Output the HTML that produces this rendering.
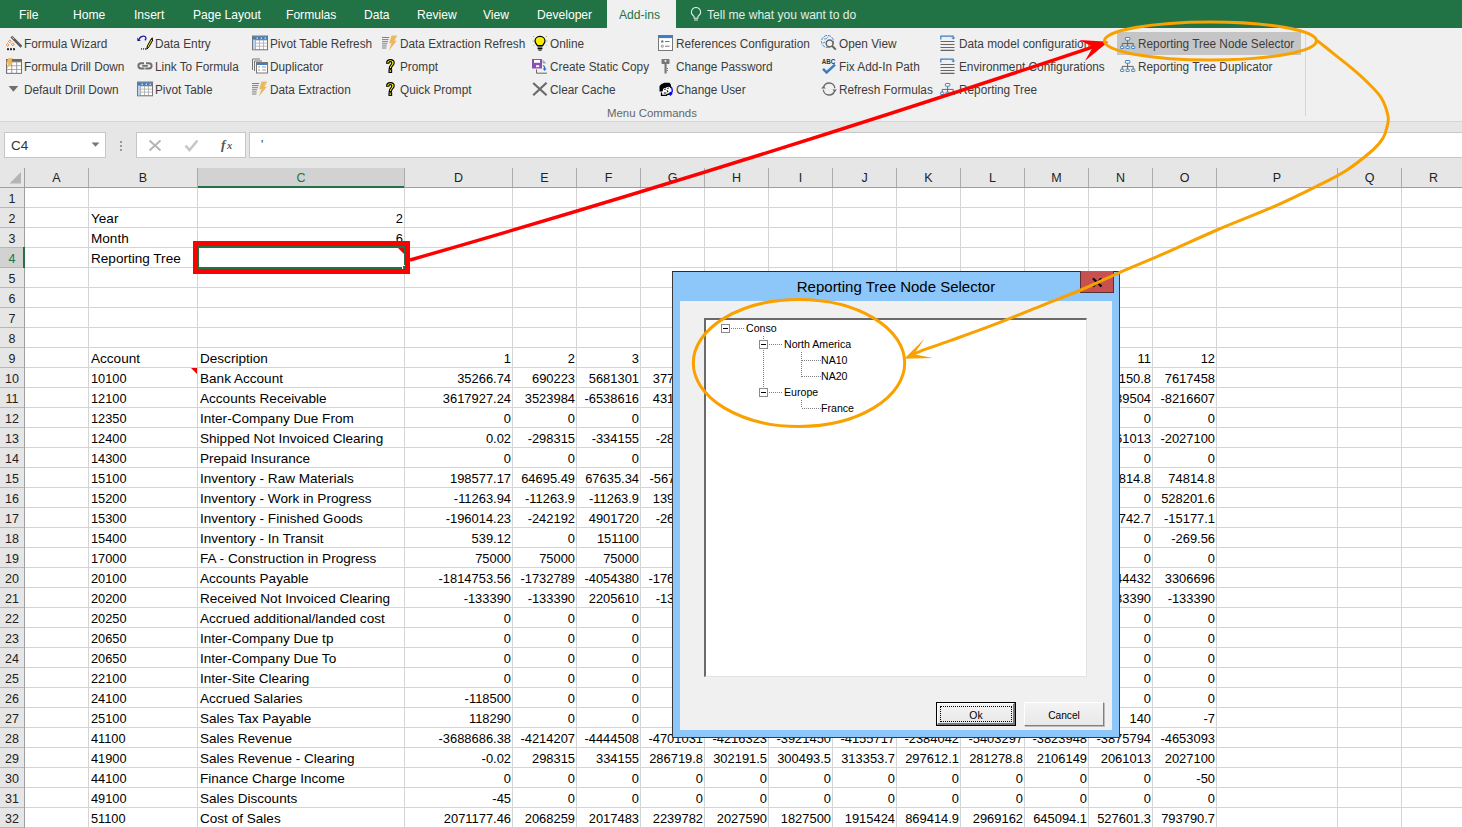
<!DOCTYPE html><html><head><meta charset="utf-8"><style>
*{box-sizing:border-box}
body{margin:0;width:1462px;height:828px;overflow:hidden;position:relative;background:#fff;font-family:"Liberation Sans",sans-serif}
.ab{position:absolute}
.tab{position:absolute;top:1px;height:28px;line-height:28px;color:#fff;font-size:13px;white-space:nowrap;transform:scaleX(0.93);transform-origin:0 50%}
.cmd{position:absolute;height:16px;line-height:16px;font-size:12.3px;color:#3c3c3c;white-space:nowrap;transform:scaleX(0.96);transform-origin:0 50%;margin-top:1px;margin-left:-1.2px}
.ic{position:absolute;width:16px;height:16px}
.t{position:absolute;height:20px;line-height:20px;font-size:13.3px;color:#000;white-space:nowrap;transform:scaleX(1.02);transform-origin:0 50%}
.tn{position:absolute;height:20px;line-height:20px;font-size:13.3px;color:#000;white-space:nowrap;transform:scaleX(0.96);transform-origin:0 50%}
.n{position:absolute;height:20px;line-height:20px;font-size:13.3px;color:#000;white-space:nowrap;text-align:right;transform:scaleX(0.97);transform-origin:100% 50%}
.gv{position:absolute;top:188px;width:1px;height:640px;background:#d4d4d4}
.gh{position:absolute;left:25px;width:1437px;height:1px;background:#d4d4d4}
.rh{position:absolute;left:0;width:24px;height:20px;line-height:20px;text-align:center;font-size:12.5px;color:#222}
.ch{position:absolute;top:168px;height:19px;line-height:20px;text-align:center;font-size:12.5px;color:#222}
</style></head><body>

<div class="ab" style="left:0;top:0;width:1462px;height:29px;background:#217346"></div>
<div class="tab" style="left:18.6px">File</div>
<div class="tab" style="left:72.6px">Home</div>
<div class="tab" style="left:134.4px">Insert</div>
<div class="tab" style="left:192.5px">Page Layout</div>
<div class="tab" style="left:286.2px">Formulas</div>
<div class="tab" style="left:364.4px">Data</div>
<div class="tab" style="left:417px">Review</div>
<div class="tab" style="left:483.2px">View</div>
<div class="tab" style="left:537.1px">Developer</div>
<div class="ab" style="left:607px;top:0;width:69px;height:29px;background:#f0f0f0"></div>
<div class="tab" style="left:619px;color:#217346">Add-ins</div>
<svg class="ab" style="left:689px;top:6px" width="14" height="16" viewBox="0 0 14 16"><path d="M7 1.5a4.5 4.5 0 0 0-2.6 8.2c.5.4.8 1 .8 1.6v1h3.6v-1c0-.6.3-1.2.8-1.6A4.5 4.5 0 0 0 7 1.5z" fill="none" stroke="#e3eee7" stroke-width="1.1"/><path d="M5.2 14h3.6" stroke="#e3eee7" stroke-width="1.1"/></svg>
<div class="tab" style="left:707px;color:#e3eee7">Tell me what you want to do</div>
<div class="ab" style="left:0;top:28px;width:1462px;height:93px;background:#f0f0f0"></div>
<div class="ab" style="left:0;top:121px;width:1462px;height:1px;background:#d5d5d5"></div>
<div class="ab" style="left:1117px;top:32px;width:184px;height:23px;background:#c5c5c5"></div>
<div class="ab" style="left:1305px;top:32px;width:1px;height:84px;background:#d5d5d5"></div>
<div class="ab" style="left:607px;top:105px;height:16px;line-height:16px;font-size:11.4px;color:#666;white-space:nowrap">Menu Commands</div>
<svg class="ic" style="left:6px;top:35px" width="16" height="16" viewBox="0 0 16 16"><path d="M5.4 1.6 L15.4 11.8" stroke="#5a5a5a" stroke-width="2.6" stroke-linecap="butt"/><path d="M6.4 2.4 L7.8 3.9" stroke="#e8e8e8" stroke-width="1"/>
<path d="M3.8 5 l1.4 1.4 -1.4 1.4 -1.4 -1.4z M1.6 8.4 l1.4 1.4 -1.4 1.4 -1.4 -1.4z M6.8 8 l1.4 1.4 -1.4 1.4 -1.4 -1.4z" fill="none" stroke="#e8731c" stroke-width="0.9"/>
<rect x="1" y="13.2" width="2" height="2" fill="#2a2a2a"/><rect x="4" y="13.2" width="2" height="2" fill="#2a2a2a"/><rect x="7" y="13.2" width="2" height="2" fill="#2a2a2a"/></svg>
<div class="cmd" style="left:25.5px;top:35px">Formula Wizard</div>
<svg class="ic" style="left:6px;top:58px" width="16" height="16" viewBox="0 0 16 16"><rect x="0.5" y="1.5" width="15" height="13.8" fill="#9a9a9a" stroke="#6f6f6f" stroke-width="1"/><rect x="6" y="1" width="10" height="2.6" fill="#6a6a6a"/>
<rect x="1.2" y="4.4" width="4" height="3" fill="#fff"/><rect x="6.2" y="4.4" width="4" height="3" fill="#fff"/><rect x="11.2" y="4.4" width="3.8" height="3" fill="#fff"/>
<rect x="1.2" y="8.2" width="4" height="3" fill="#fff"/><rect x="6.2" y="8.2" width="4" height="3" fill="#fff"/><rect x="11.2" y="8.2" width="3.8" height="3" fill="#fff"/>
<rect x="1.2" y="12" width="4" height="2.8" fill="#fff"/><rect x="6.2" y="12" width="4" height="2.8" fill="#fff"/><rect x="11.2" y="12" width="3.8" height="2.8" fill="#fff"/>
<path d="M2.6 -0.2 L7.2 -0.2 L4.8 3.8 L7.4 3.8 L0.6 10.8 L2.4 5.6 L0 5.6z" fill="#ecb961"/></svg>
<div class="cmd" style="left:25.5px;top:58px">Formula Drill Down</div>
<svg class="ic" style="left:6px;top:81px" width="16" height="16" viewBox="0 0 16 16"><path d="M2.6 5 L12.2 5 L7.4 10.8z" fill="#6f6f6f"/></svg>
<div class="cmd" style="left:25.5px;top:81px">Default Drill Down</div>
<svg class="ic" style="left:137px;top:35px" width="16" height="16" viewBox="0 0 16 16"><path d="M2.2 4.6 C2.5 1 8 0.2 8.8 2.6 C9.2 3.8 8.4 4.8 7.8 5.2" fill="none" stroke="#1c1c9a" stroke-width="1.3"/><path d="M0.3 2.4 L0.3 6 L3.8 6z" fill="#1c1c9a"/>
<rect x="4" y="13.4" width="1.1" height="1.1" fill="#000"/><rect x="6" y="13.4" width="1.1" height="1.1" fill="#000"/><rect x="8" y="13.4" width="1.1" height="1.1" fill="#000"/>
<path d="M9.8 14.2 L10.4 10.8 L14.2 4 L15.8 5 L12 11.8z" fill="#f2e52a" stroke="#000" stroke-width="1"/><path d="M14.2 4 L15 2.8 L16 3.4 L15.8 5z" fill="#c00" stroke="#000" stroke-width="0.6"/></svg>
<div class="cmd" style="left:156.6px;top:35px">Data Entry</div>
<svg class="ic" style="left:137px;top:58px" width="16" height="16" viewBox="0 0 16 16"><path d="M7 5.2 H4 A2.6 2.6 0 0 0 4 10.4 H7.6" fill="none" stroke="#6f6f6f" stroke-width="2"/><path d="M9 5.2 H12 A2.6 2.6 0 0 1 12 10.4 H8.4" fill="none" stroke="#6f6f6f" stroke-width="2"/><path d="M5.2 7.8 H10.8" stroke="#6f6f6f" stroke-width="1.8"/></svg>
<div class="cmd" style="left:156.6px;top:58px">Link To Formula</div>
<svg class="ic" style="left:137px;top:81px" width="16" height="16" viewBox="0 0 16 16"><rect x="0.5" y="1" width="15" height="13.8" fill="#a9a9a9" stroke="#777" stroke-width="1"/><rect x="1" y="1.5" width="14" height="3.2" fill="#3f7ec4"/>
<rect x="4.6" y="2.6" width="1.2" height="1.2" fill="#fff"/><rect x="8.8" y="2.6" width="1.2" height="1.2" fill="#fff"/><rect x="12.6" y="2.6" width="1.2" height="1.2" fill="#fff"/>
<rect x="1" y="4.7" width="2.2" height="9.6" fill="#b9d3ef"/>
<rect x="4" y="5.5" width="3.2" height="2.2" fill="#fff"/><rect x="8" y="5.5" width="3.2" height="2.2" fill="#fff"/><rect x="12" y="5.5" width="3" height="2.2" fill="#fff"/>
<rect x="4" y="8.5" width="3.2" height="2.2" fill="#fff"/><rect x="8" y="8.5" width="3.2" height="2.2" fill="#fff"/><rect x="12" y="8.5" width="3" height="2.2" fill="#fff"/>
<rect x="4" y="11.5" width="3.2" height="2.6" fill="#fff"/><rect x="8" y="11.5" width="3.2" height="2.6" fill="#fff"/><rect x="12" y="11.5" width="3" height="2.6" fill="#fff"/></svg>
<div class="cmd" style="left:156.6px;top:81px">Pivot Table</div>
<svg class="ic" style="left:252px;top:35px" width="16" height="16" viewBox="0 0 16 16"><rect x="0.5" y="1" width="15" height="13.8" fill="#a9a9a9" stroke="#777" stroke-width="1"/><rect x="1" y="1.5" width="14" height="3.2" fill="#3f7ec4"/>
<rect x="4.6" y="2.6" width="1.2" height="1.2" fill="#fff"/><rect x="8.8" y="2.6" width="1.2" height="1.2" fill="#fff"/><rect x="12.6" y="2.6" width="1.2" height="1.2" fill="#fff"/>
<rect x="1" y="4.7" width="2.2" height="9.6" fill="#b9d3ef"/>
<rect x="4" y="5.5" width="3.2" height="2.2" fill="#fff"/><rect x="8" y="5.5" width="3.2" height="2.2" fill="#fff"/><rect x="12" y="5.5" width="3" height="2.2" fill="#fff"/>
<rect x="4" y="8.5" width="3.2" height="2.2" fill="#fff"/><rect x="8" y="8.5" width="3.2" height="2.2" fill="#fff"/><rect x="12" y="8.5" width="3" height="2.2" fill="#fff"/>
<rect x="4" y="11.5" width="3.2" height="2.6" fill="#fff"/><rect x="8" y="11.5" width="3.2" height="2.6" fill="#fff"/><rect x="12" y="11.5" width="3" height="2.6" fill="#fff"/></svg>
<div class="cmd" style="left:271.3px;top:35px">Pivot Table Refresh</div>
<svg class="ic" style="left:252px;top:58px" width="16" height="16" viewBox="0 0 16 16"><path d="M0.5 12 V1 H8" fill="none" stroke="#777" stroke-width="1"/><path d="M2.5 13 V3 H10" fill="none" stroke="#777" stroke-width="1"/>
<rect x="4.5" y="4.5" width="11" height="10.5" fill="#fff" stroke="#777" stroke-width="1"/><rect x="5" y="5" width="10" height="2" fill="#3f7ec4"/>
<path d="M6 9H8M10 9H14M6 12H8M10 12H14" stroke="#999" stroke-width="1.2"/></svg>
<div class="cmd" style="left:271.3px;top:58px">Duplicator</div>
<svg class="ic" style="left:252px;top:81px" width="16" height="16" viewBox="0 0 16 16"><path d="M0 2.5H7.2M0 4.6H6.6M0 6.7H6M0 8.8H5.2M0 10.9H4.6M0 13H4.4" stroke="#6a6a6a" stroke-width="0.85"/>
<path d="M9.5 0.5 L15.2 0.5 L12.4 5.8 L14.8 5.8 L7 15.5 L9.4 8.2 L7.2 8.2z" fill="#ebb85e"/></svg>
<div class="cmd" style="left:271.3px;top:81px">Data Extraction</div>
<svg class="ic" style="left:382px;top:35px" width="16" height="16" viewBox="0 0 16 16"><path d="M0 2.5H7.2M0 4.6H6.6M0 6.7H6M0 8.8H5.2M0 10.9H4.6M0 13H4.4" stroke="#6a6a6a" stroke-width="0.85"/>
<path d="M9.5 0.5 L15.2 0.5 L12.4 5.8 L14.8 5.8 L7 15.5 L9.4 8.2 L7.2 8.2z" fill="#ebb85e"/></svg>
<div class="cmd" style="left:401.3px;top:35px">Data Extraction Refresh</div>
<svg class="ic" style="left:382px;top:58px" width="16" height="16" viewBox="0 0 16 16"><path d="M4.6 5.2 C4.6 2.6 6.4 1.6 8.4 1.6 C10.8 1.6 12.2 3 12.2 5 C12.2 7.6 9.4 7.8 9.4 10.5 L7.2 10.5 C7.2 7.2 9.8 6.8 9.8 5 C9.8 4 9.2 3.6 8.4 3.6 C7.4 3.6 6.9 4.2 6.9 5.2z" fill="#f8f000" stroke="#000" stroke-width="1.1"/>
<rect x="7" y="11.8" width="2.6" height="2.6" fill="#f8f000" stroke="#000" stroke-width="1.1"/></svg>
<div class="cmd" style="left:401.3px;top:58px">Prompt</div>
<svg class="ic" style="left:382px;top:81px" width="16" height="16" viewBox="0 0 16 16"><path d="M4.6 5.2 C4.6 2.6 6.4 1.6 8.4 1.6 C10.8 1.6 12.2 3 12.2 5 C12.2 7.6 9.4 7.8 9.4 10.5 L7.2 10.5 C7.2 7.2 9.8 6.8 9.8 5 C9.8 4 9.2 3.6 8.4 3.6 C7.4 3.6 6.9 4.2 6.9 5.2z" fill="#f8f000" stroke="#000" stroke-width="1.1"/>
<rect x="7" y="11.8" width="2.6" height="2.6" fill="#f8f000" stroke="#000" stroke-width="1.1"/></svg>
<div class="cmd" style="left:401.3px;top:81px">Quick Prompt</div>
<svg class="ic" style="left:532px;top:35px" width="16" height="16" viewBox="0 0 16 16"><path d="M8 1.4 C4.8 1.4 3 3.6 3 6 C3 8 4.6 9.2 5.4 10.6 L10.6 10.6 C11.4 9.2 13 8 13 6 C13 3.6 11.2 1.4 8 1.4z" fill="#f6ef00" stroke="#000" stroke-width="1.2"/>
<path d="M5.6 12H10.4M5.6 13.6H10.4" stroke="#000" stroke-width="1.1"/><path d="M6.4 15.1H9.6" stroke="#000" stroke-width="1"/>
<path d="M1 1L2 2M15 1L14 2M0.5 6H1.5M14.5 6H15.5M1.5 10.5L2.3 9.8M14.5 10.5L13.7 9.8" stroke="#9a9a2a" stroke-width="0.8"/></svg>
<div class="cmd" style="left:551.6px;top:35px">Online</div>
<svg class="ic" style="left:532px;top:58px" width="16" height="16" viewBox="0 0 16 16"><rect x="0" y="1" width="10" height="9.5" fill="#8a4fb0"/><rect x="2" y="2" width="6" height="2.8" fill="#fff"/><rect x="4" y="7.2" width="3.2" height="2" fill="#fff"/>
<path d="M4.5 11.5V15.2H15" fill="none" stroke="#666" stroke-width="1"/><path d="M11 2.5 L13.5 5 L11 5z" fill="none" stroke="#888" stroke-width="0.8"/>
<path d="M11 7.5 C12.5 8 13 9.5 12.6 11.4" fill="none" stroke="#2f6fb8" stroke-width="1.3"/><path d="M10.6 10.6 L12.6 13 L14.6 10.6z" fill="#2f6fb8"/></svg>
<div class="cmd" style="left:551.6px;top:58px">Create Static Copy</div>
<svg class="ic" style="left:532px;top:81px" width="16" height="16" viewBox="0 0 16 16"><path d="M1.2 2L14.6 14.2M14.6 1.8L1.2 14.2" stroke="#6a6a6a" stroke-width="2.2"/></svg>
<div class="cmd" style="left:551.6px;top:81px">Clear Cache</div>
<svg class="ic" style="left:658px;top:35px" width="16" height="16" viewBox="0 0 16 16"><rect x="0.5" y="0.5" width="14" height="15" fill="#fff" stroke="#777" stroke-width="1"/><rect x="0.5" y="0.5" width="14" height="2.6" fill="#3f7ec4"/>
<circle cx="4.3" cy="6.5" r="1.2" fill="#777"/><circle cx="4.3" cy="11.2" r="1.1" fill="none" stroke="#777" stroke-width="0.8"/><path d="M7 6.5H11.5M7 11.2H11.5" stroke="#777" stroke-width="1"/></svg>
<div class="cmd" style="left:677.2px;top:35px">References Configuration</div>
<svg class="ic" style="left:658px;top:58px" width="16" height="16" viewBox="0 0 16 16"><rect x="3.5" y="1" width="8" height="5" rx="0.8" fill="#777"/><rect x="6.6" y="2" width="1.8" height="1.8" fill="#f0f0f0"/>
<path d="M6.5 6V15.5H8.6V6" fill="#777"/><rect x="8.4" y="10" width="1.6" height="1" fill="#777"/><rect x="8.4" y="12" width="1.6" height="1" fill="#777"/></svg>
<div class="cmd" style="left:677.2px;top:58px">Change Password</div>
<svg class="ic" style="left:658px;top:81px" width="16" height="16" viewBox="0 0 16 16"><path d="M1.5 10.5 V5 L3.5 3 L6.5 1.8 H11.5 L13 3.8 V7.5 L11 5.8 L8 6.8 L5.5 7.8 L4.6 10.5z" fill="#000"/>
<path d="M4.6 10.5 L5.5 7.8 L8 6.8 L11 5.8 L12.6 7.5 V12 L11 12.8 H4z" fill="#fff"/>
<path d="M3.5 11.5 V14.3 H8.6 L9 13.3 H12 V11.8" fill="none" stroke="#000" stroke-width="1.3"/>
<path d="M6.3 8.6 L7.8 8 M9.3 7.4 L10.8 7 M9 9.2 L9.8 10.5 L9 11.4 M5.8 12 H8" stroke="#000" stroke-width="1"/>
<path d="M12.6 5.8 L13.8 7 L14.3 9.5 L14 11.2 L12.8 12.2" stroke="#0000ff" stroke-width="1.3" fill="none"/><path d="M10.2 12.4 L13 10.4 L14.6 12.8 L12.4 15z" fill="#0000ff"/></svg>
<div class="cmd" style="left:677.2px;top:81px">Change User</div>
<svg class="ic" style="left:821px;top:35px" width="16" height="16" viewBox="0 0 16 16"><circle cx="6.5" cy="6.5" r="6" fill="none" stroke="#3b7ec6" stroke-width="1" stroke-dasharray="3 1"/><path d="M3 3.5 C4.5 5 6 3 7 2 M2 8 L4 7" stroke="#3b7ec6" stroke-width="0.9" fill="none"/>
<circle cx="8.6" cy="8.4" r="3.4" fill="#f0f0f0" stroke="#666" stroke-width="1.5"/><path d="M11 10.8L14.8 14.6" stroke="#666" stroke-width="2"/></svg>
<div class="cmd" style="left:840.4px;top:35px">Open View</div>
<svg class="ic" style="left:821px;top:58px" width="16" height="16" viewBox="0 0 16 16"><text x="0.8" y="5.8" font-family="Liberation Sans" font-weight="bold" font-size="6.4" fill="#333" textLength="13.6" lengthAdjust="spacingAndGlyphs">ABC</text>
<path d="M2 10.8 L5.6 14.4 L14 6.6" fill="none" stroke="#3b7ec6" stroke-width="2.6"/></svg>
<div class="cmd" style="left:840.4px;top:58px">Fix Add-In Path</div>
<svg class="ic" style="left:821px;top:81px" width="16" height="16" viewBox="0 0 16 16"><path d="M2.5 7 C3 4 5.5 2 8.3 2 C11.3 2 13.6 4.2 13.8 7.2" fill="none" stroke="#6a6a6a" stroke-width="1.3"/><path d="M13.8 9 C13.2 12 10.8 14 8 14 C5 14 2.6 11.8 2.3 8.8" fill="none" stroke="#6a6a6a" stroke-width="1.3"/>
<path d="M0 7.6 L2.4 5 L4.8 7.6z" fill="#6a6a6a"/><path d="M11.4 8.4 L13.8 11 L16 8.4z" fill="#6a6a6a"/></svg>
<div class="cmd" style="left:840.4px;top:81px">Refresh Formulas</div>
<svg class="ic" style="left:940px;top:35px" width="16" height="16" viewBox="0 0 16 16"><path d="M0.8 4.6V1.2H13.2V2.6" fill="none" stroke="#3b7ec6" stroke-width="1.2"/><path d="M11.2 2.4 L13.3 4.4 L15.4 2.4z" fill="#3b7ec6"/>
<path d="M0.5 6.5H14.5M0.5 9.5H14.5M0.5 12.5H14.5M0.5 15.4H14.5" stroke="#666" stroke-width="1.1"/></svg>
<div class="cmd" style="left:960.4px;top:35px">Data model configuration</div>
<svg class="ic" style="left:940px;top:58px" width="16" height="16" viewBox="0 0 16 16"><path d="M0.8 4.6V1.2H13.2V2.6" fill="none" stroke="#3b7ec6" stroke-width="1.2"/><path d="M11.2 2.4 L13.3 4.4 L15.4 2.4z" fill="#3b7ec6"/>
<path d="M0.5 6.5H14.5M0.5 9.5H14.5M0.5 12.5H14.5M0.5 15.4H14.5" stroke="#666" stroke-width="1.1"/></svg>
<div class="cmd" style="left:960.4px;top:58px">Environment Configurations</div>
<svg class="ic" style="left:940px;top:81px" width="16" height="16" viewBox="0 0 16 16"><path d="M7.6 5.2V11M2.2 11V8.4H13.2V11" fill="none" stroke="#666" stroke-width="1"/>
<rect x="5.4" y="2.5" width="4.4" height="2.7" rx="0.4" fill="#fff" stroke="#3b7ec6" stroke-width="0.95"/>
<rect x="0.6" y="11.2" width="3.2" height="2.3" rx="0.4" fill="#fff" stroke="#3b7ec6" stroke-width="0.95"/><rect x="6.0" y="11.2" width="3.2" height="2.3" rx="0.4" fill="#fff" stroke="#3b7ec6" stroke-width="0.95"/><rect x="11.6" y="11.2" width="3.2" height="2.3" rx="0.4" fill="#fff" stroke="#3b7ec6" stroke-width="0.95"/></svg>
<div class="cmd" style="left:960.4px;top:81px">Reporting Tree</div>
<svg class="ic" style="left:1120px;top:35px" width="16" height="16" viewBox="0 0 16 16"><path d="M7.6 5.2V11M2.2 11V8.4H13.2V11" fill="none" stroke="#666" stroke-width="1"/>
<rect x="5.4" y="2.5" width="4.4" height="2.7" rx="0.4" fill="#fff" stroke="#3b7ec6" stroke-width="0.95"/>
<rect x="0.6" y="11.2" width="3.2" height="2.3" rx="0.4" fill="#fff" stroke="#3b7ec6" stroke-width="0.95"/><rect x="6.0" y="11.2" width="3.2" height="2.3" rx="0.4" fill="#fff" stroke="#3b7ec6" stroke-width="0.95"/><rect x="11.6" y="11.2" width="3.2" height="2.3" rx="0.4" fill="#fff" stroke="#3b7ec6" stroke-width="0.95"/></svg>
<div class="cmd" style="left:1139.6px;top:35px">Reporting Tree Node Selector</div>
<svg class="ic" style="left:1120px;top:58px" width="16" height="16" viewBox="0 0 16 16"><path d="M7.6 5.2V11M2.2 11V8.4H13.2V11" fill="none" stroke="#666" stroke-width="1"/>
<rect x="5.4" y="2.5" width="4.4" height="2.7" rx="0.4" fill="#fff" stroke="#3b7ec6" stroke-width="0.95"/>
<rect x="0.6" y="11.2" width="3.2" height="2.3" rx="0.4" fill="#fff" stroke="#3b7ec6" stroke-width="0.95"/><rect x="6.0" y="11.2" width="3.2" height="2.3" rx="0.4" fill="#fff" stroke="#3b7ec6" stroke-width="0.95"/><rect x="11.6" y="11.2" width="3.2" height="2.3" rx="0.4" fill="#fff" stroke="#3b7ec6" stroke-width="0.95"/></svg>
<div class="cmd" style="left:1139.6px;top:58px">Reporting Tree Duplicator</div>
<div class="ab" style="left:0;top:122px;width:1462px;height:46px;background:#e6e6e6"></div>
<div class="ab" style="left:4px;top:132px;width:102px;height:26px;background:#fff;border:1px solid #c6c6c6"></div>
<div class="ab" style="left:11px;top:136px;height:20px;line-height:20px;font-size:13.5px;color:#333">C4</div>
<svg class="ab" style="left:91px;top:142px" width="10" height="6"><path d="M0.5 0.5H8.5L4.5 4.8z" fill="#777"/></svg>
<div class="ab" style="left:120px;top:141px;width:2px;height:2px;background:#9a9a9a"></div>
<div class="ab" style="left:120px;top:145px;width:2px;height:2px;background:#9a9a9a"></div>
<div class="ab" style="left:120px;top:149px;width:2px;height:2px;background:#9a9a9a"></div>
<div class="ab" style="left:136px;top:132px;width:110px;height:26px;background:#fff;border:1px solid #c6c6c6"></div>
<svg class="ab" style="left:148px;top:139px" width="14" height="13"><path d="M1.5 1.5L12.5 11.5M12.5 1.5L1.5 11.5" stroke="#b4b4b4" stroke-width="1.9"/></svg>
<svg class="ab" style="left:184px;top:139px" width="15" height="13"><path d="M1.5 6.5L5.5 11L13.5 1.5" fill="none" stroke="#c6c6c6" stroke-width="2.5"/></svg>
<svg class="ab" style="left:218px;top:136px" width="20" height="20"><text x="3" y="13" font-family="Liberation Serif" font-style="italic" font-weight="bold" font-size="13.5" fill="#555">f</text><text x="9" y="13" font-family="Liberation Serif" font-style="italic" font-weight="bold" font-size="10.5" fill="#555">x</text></svg>
<div class="ab" style="left:249px;top:132px;width:1220px;height:26px;background:#fff;border:1px solid #c6c6c6"></div>
<div class="ab" style="left:261px;top:135px;height:20px;line-height:20px;font-size:12px;color:#333">'</div>
<div class="ab" style="left:0;top:168px;width:1462px;height:19px;background:#e6e6e6"></div>
<div class="ab" style="left:0;top:188px;width:24px;height:640px;background:#e6e6e6"></div>
<div class="ab" style="left:198px;top:168px;width:206px;height:19px;background:#d2d2d2"></div>
<div class="ab" style="left:0;top:248px;width:24px;height:19px;background:#d2d2d2"></div>
<svg class="ab" style="left:0;top:168px" width="24" height="19"><path d="M21 4V15.5H9.5z" fill="#b4b4b4"/></svg>
<div class="ab" style="left:24px;top:168px;width:1px;height:19px;background:#ababab"></div>
<div class="ab" style="left:88px;top:168px;width:1px;height:19px;background:#ababab"></div>
<div class="ab" style="left:197px;top:168px;width:1px;height:19px;background:#ababab"></div>
<div class="ab" style="left:404px;top:168px;width:1px;height:19px;background:#ababab"></div>
<div class="ab" style="left:512px;top:168px;width:1px;height:19px;background:#ababab"></div>
<div class="ab" style="left:576px;top:168px;width:1px;height:19px;background:#ababab"></div>
<div class="ab" style="left:640px;top:168px;width:1px;height:19px;background:#ababab"></div>
<div class="ab" style="left:704px;top:168px;width:1px;height:19px;background:#ababab"></div>
<div class="ab" style="left:768px;top:168px;width:1px;height:19px;background:#ababab"></div>
<div class="ab" style="left:832px;top:168px;width:1px;height:19px;background:#ababab"></div>
<div class="ab" style="left:896px;top:168px;width:1px;height:19px;background:#ababab"></div>
<div class="ab" style="left:960px;top:168px;width:1px;height:19px;background:#ababab"></div>
<div class="ab" style="left:1024px;top:168px;width:1px;height:19px;background:#ababab"></div>
<div class="ab" style="left:1088px;top:168px;width:1px;height:19px;background:#ababab"></div>
<div class="ab" style="left:1152px;top:168px;width:1px;height:19px;background:#ababab"></div>
<div class="ab" style="left:1216px;top:168px;width:1px;height:19px;background:#ababab"></div>
<div class="ab" style="left:1337px;top:168px;width:1px;height:19px;background:#ababab"></div>
<div class="ab" style="left:1401px;top:168px;width:1px;height:19px;background:#ababab"></div>
<div class="ab" style="left:0;top:187px;width:1462px;height:1px;background:#9f9f9f"></div>
<div class="ch" style="left:25px;width:63px;color:#222">A</div>
<div class="ch" style="left:89px;width:108px;color:#222">B</div>
<div class="ch" style="left:198px;width:206px;color:#217346">C</div>
<div class="ch" style="left:405px;width:107px;color:#222">D</div>
<div class="ch" style="left:513px;width:63px;color:#222">E</div>
<div class="ch" style="left:577px;width:63px;color:#222">F</div>
<div class="ch" style="left:641px;width:63px;color:#222">G</div>
<div class="ch" style="left:705px;width:63px;color:#222">H</div>
<div class="ch" style="left:769px;width:63px;color:#222">I</div>
<div class="ch" style="left:833px;width:63px;color:#222">J</div>
<div class="ch" style="left:897px;width:63px;color:#222">K</div>
<div class="ch" style="left:961px;width:63px;color:#222">L</div>
<div class="ch" style="left:1025px;width:63px;color:#222">M</div>
<div class="ch" style="left:1089px;width:63px;color:#222">N</div>
<div class="ch" style="left:1153px;width:63px;color:#222">O</div>
<div class="ch" style="left:1217px;width:120px;color:#222">P</div>
<div class="ch" style="left:1338px;width:63px;color:#222">Q</div>
<div class="ch" style="left:1402px;width:63px;color:#222">R</div>
<div class="ab" style="left:198px;top:186px;width:206px;height:2px;background:#217346"></div>
<div class="ab" style="left:24px;top:168px;width:1px;height:660px;background:#9f9f9f"></div>
<div class="ab" style="left:0;top:207px;width:24px;height:1px;background:#b6b6b6"></div>
<div class="rh" style="top:189px;color:#222">1</div>
<div class="ab" style="left:0;top:227px;width:24px;height:1px;background:#b6b6b6"></div>
<div class="rh" style="top:209px;color:#222">2</div>
<div class="ab" style="left:0;top:247px;width:24px;height:1px;background:#b6b6b6"></div>
<div class="rh" style="top:229px;color:#222">3</div>
<div class="ab" style="left:0;top:267px;width:24px;height:1px;background:#b6b6b6"></div>
<div class="rh" style="top:249px;color:#217346">4</div>
<div class="ab" style="left:0;top:287px;width:24px;height:1px;background:#b6b6b6"></div>
<div class="rh" style="top:269px;color:#222">5</div>
<div class="ab" style="left:0;top:307px;width:24px;height:1px;background:#b6b6b6"></div>
<div class="rh" style="top:289px;color:#222">6</div>
<div class="ab" style="left:0;top:327px;width:24px;height:1px;background:#b6b6b6"></div>
<div class="rh" style="top:309px;color:#222">7</div>
<div class="ab" style="left:0;top:347px;width:24px;height:1px;background:#b6b6b6"></div>
<div class="rh" style="top:329px;color:#222">8</div>
<div class="ab" style="left:0;top:367px;width:24px;height:1px;background:#b6b6b6"></div>
<div class="rh" style="top:349px;color:#222">9</div>
<div class="ab" style="left:0;top:387px;width:24px;height:1px;background:#b6b6b6"></div>
<div class="rh" style="top:369px;color:#222">10</div>
<div class="ab" style="left:0;top:407px;width:24px;height:1px;background:#b6b6b6"></div>
<div class="rh" style="top:389px;color:#222">11</div>
<div class="ab" style="left:0;top:427px;width:24px;height:1px;background:#b6b6b6"></div>
<div class="rh" style="top:409px;color:#222">12</div>
<div class="ab" style="left:0;top:447px;width:24px;height:1px;background:#b6b6b6"></div>
<div class="rh" style="top:429px;color:#222">13</div>
<div class="ab" style="left:0;top:467px;width:24px;height:1px;background:#b6b6b6"></div>
<div class="rh" style="top:449px;color:#222">14</div>
<div class="ab" style="left:0;top:487px;width:24px;height:1px;background:#b6b6b6"></div>
<div class="rh" style="top:469px;color:#222">15</div>
<div class="ab" style="left:0;top:507px;width:24px;height:1px;background:#b6b6b6"></div>
<div class="rh" style="top:489px;color:#222">16</div>
<div class="ab" style="left:0;top:527px;width:24px;height:1px;background:#b6b6b6"></div>
<div class="rh" style="top:509px;color:#222">17</div>
<div class="ab" style="left:0;top:547px;width:24px;height:1px;background:#b6b6b6"></div>
<div class="rh" style="top:529px;color:#222">18</div>
<div class="ab" style="left:0;top:567px;width:24px;height:1px;background:#b6b6b6"></div>
<div class="rh" style="top:549px;color:#222">19</div>
<div class="ab" style="left:0;top:587px;width:24px;height:1px;background:#b6b6b6"></div>
<div class="rh" style="top:569px;color:#222">20</div>
<div class="ab" style="left:0;top:607px;width:24px;height:1px;background:#b6b6b6"></div>
<div class="rh" style="top:589px;color:#222">21</div>
<div class="ab" style="left:0;top:627px;width:24px;height:1px;background:#b6b6b6"></div>
<div class="rh" style="top:609px;color:#222">22</div>
<div class="ab" style="left:0;top:647px;width:24px;height:1px;background:#b6b6b6"></div>
<div class="rh" style="top:629px;color:#222">23</div>
<div class="ab" style="left:0;top:667px;width:24px;height:1px;background:#b6b6b6"></div>
<div class="rh" style="top:649px;color:#222">24</div>
<div class="ab" style="left:0;top:687px;width:24px;height:1px;background:#b6b6b6"></div>
<div class="rh" style="top:669px;color:#222">25</div>
<div class="ab" style="left:0;top:707px;width:24px;height:1px;background:#b6b6b6"></div>
<div class="rh" style="top:689px;color:#222">26</div>
<div class="ab" style="left:0;top:727px;width:24px;height:1px;background:#b6b6b6"></div>
<div class="rh" style="top:709px;color:#222">27</div>
<div class="ab" style="left:0;top:747px;width:24px;height:1px;background:#b6b6b6"></div>
<div class="rh" style="top:729px;color:#222">28</div>
<div class="ab" style="left:0;top:767px;width:24px;height:1px;background:#b6b6b6"></div>
<div class="rh" style="top:749px;color:#222">29</div>
<div class="ab" style="left:0;top:787px;width:24px;height:1px;background:#b6b6b6"></div>
<div class="rh" style="top:769px;color:#222">30</div>
<div class="ab" style="left:0;top:807px;width:24px;height:1px;background:#b6b6b6"></div>
<div class="rh" style="top:789px;color:#222">31</div>
<div class="ab" style="left:0;top:827px;width:24px;height:1px;background:#b6b6b6"></div>
<div class="rh" style="top:809px;color:#222">32</div>
<div class="ab" style="left:23px;top:247px;width:2px;height:21px;background:#217346"></div>
<div class="gv" style="left:88px"></div>
<div class="gv" style="left:197px"></div>
<div class="gv" style="left:404px"></div>
<div class="gv" style="left:512px"></div>
<div class="gv" style="left:576px"></div>
<div class="gv" style="left:640px"></div>
<div class="gv" style="left:704px"></div>
<div class="gv" style="left:768px"></div>
<div class="gv" style="left:832px"></div>
<div class="gv" style="left:896px"></div>
<div class="gv" style="left:960px"></div>
<div class="gv" style="left:1024px"></div>
<div class="gv" style="left:1088px"></div>
<div class="gv" style="left:1152px"></div>
<div class="gv" style="left:1216px"></div>
<div class="gv" style="left:1337px"></div>
<div class="gv" style="left:1401px"></div>
<div class="gh" style="top:207px"></div>
<div class="gh" style="top:227px"></div>
<div class="gh" style="top:247px"></div>
<div class="gh" style="top:267px"></div>
<div class="gh" style="top:287px"></div>
<div class="gh" style="top:307px"></div>
<div class="gh" style="top:327px"></div>
<div class="gh" style="top:347px"></div>
<div class="gh" style="top:367px"></div>
<div class="gh" style="top:387px"></div>
<div class="gh" style="top:407px"></div>
<div class="gh" style="top:427px"></div>
<div class="gh" style="top:447px"></div>
<div class="gh" style="top:467px"></div>
<div class="gh" style="top:487px"></div>
<div class="gh" style="top:507px"></div>
<div class="gh" style="top:527px"></div>
<div class="gh" style="top:547px"></div>
<div class="gh" style="top:567px"></div>
<div class="gh" style="top:587px"></div>
<div class="gh" style="top:607px"></div>
<div class="gh" style="top:627px"></div>
<div class="gh" style="top:647px"></div>
<div class="gh" style="top:667px"></div>
<div class="gh" style="top:687px"></div>
<div class="gh" style="top:707px"></div>
<div class="gh" style="top:727px"></div>
<div class="gh" style="top:747px"></div>
<div class="gh" style="top:767px"></div>
<div class="gh" style="top:787px"></div>
<div class="gh" style="top:807px"></div>
<div class="gh" style="top:827px"></div>
<div class="t" style="left:90.5px;top:209px">Year</div>
<div class="t" style="left:90.5px;top:229px">Month</div>
<div class="t" style="left:90.5px;top:249px">Reporting Tree</div>
<div class="n" style="left:282.5px;width:120px;top:209px">2</div>
<div class="n" style="left:282.5px;width:120px;top:229px">6</div>
<div class="t" style="left:90.5px;top:349px">Account</div>
<div class="t" style="left:199.5px;top:349px">Description</div>
<div class="n" style="left:390.5px;width:120px;top:349px">1</div>
<div class="n" style="left:454.5px;width:120px;top:349px">2</div>
<div class="n" style="left:518.5px;width:120px;top:349px">3</div>
<div class="n" style="left:582.5px;width:120px;top:349px">4</div>
<div class="n" style="left:646.5px;width:120px;top:349px">5</div>
<div class="n" style="left:710.5px;width:120px;top:349px">6</div>
<div class="n" style="left:774.5px;width:120px;top:349px">7</div>
<div class="n" style="left:838.5px;width:120px;top:349px">8</div>
<div class="n" style="left:902.5px;width:120px;top:349px">9</div>
<div class="n" style="left:966.5px;width:120px;top:349px">10</div>
<div class="n" style="left:1030.5px;width:120px;top:349px">11</div>
<div class="n" style="left:1094.5px;width:120px;top:349px">12</div>
<div class="tn" style="left:90.5px;top:369px">10100</div>
<div class="t" style="left:199.5px;top:369px">Bank Account</div>
<div class="n" style="left:390.5px;width:120px;top:369px">35266.74</div>
<div class="n" style="left:454.5px;width:120px;top:369px">690223</div>
<div class="n" style="left:518.5px;width:120px;top:369px">5681301</div>
<div class="n" style="left:582.5px;width:120px;top:369px">3770863</div>
<div class="n" style="left:1030.5px;width:120px;top:369px">7642150.8</div>
<div class="n" style="left:1094.5px;width:120px;top:369px">7617458</div>
<div class="tn" style="left:90.5px;top:389px">12100</div>
<div class="t" style="left:199.5px;top:389px">Accounts Receivable</div>
<div class="n" style="left:390.5px;width:120px;top:389px">3617927.24</div>
<div class="n" style="left:454.5px;width:120px;top:389px">3523984</div>
<div class="n" style="left:518.5px;width:120px;top:389px">-6538616</div>
<div class="n" style="left:582.5px;width:120px;top:389px">4310283</div>
<div class="n" style="left:1030.5px;width:120px;top:389px">-8239504</div>
<div class="n" style="left:1094.5px;width:120px;top:389px">-8216607</div>
<div class="tn" style="left:90.5px;top:409px">12350</div>
<div class="t" style="left:199.5px;top:409px">Inter-Company Due From</div>
<div class="n" style="left:390.5px;width:120px;top:409px">0</div>
<div class="n" style="left:454.5px;width:120px;top:409px">0</div>
<div class="n" style="left:518.5px;width:120px;top:409px">0</div>
<div class="n" style="left:582.5px;width:120px;top:409px">0</div>
<div class="n" style="left:1030.5px;width:120px;top:409px">0</div>
<div class="n" style="left:1094.5px;width:120px;top:409px">0</div>
<div class="tn" style="left:90.5px;top:429px">12400</div>
<div class="t" style="left:199.5px;top:429px">Shipped Not Invoiced Clearing</div>
<div class="n" style="left:390.5px;width:120px;top:429px">0.02</div>
<div class="n" style="left:454.5px;width:120px;top:429px">-298315</div>
<div class="n" style="left:518.5px;width:120px;top:429px">-334155</div>
<div class="n" style="left:582.5px;width:120px;top:429px">-283021</div>
<div class="n" style="left:1030.5px;width:120px;top:429px">-2061013</div>
<div class="n" style="left:1094.5px;width:120px;top:429px">-2027100</div>
<div class="tn" style="left:90.5px;top:449px">14300</div>
<div class="t" style="left:199.5px;top:449px">Prepaid Insurance</div>
<div class="n" style="left:390.5px;width:120px;top:449px">0</div>
<div class="n" style="left:454.5px;width:120px;top:449px">0</div>
<div class="n" style="left:518.5px;width:120px;top:449px">0</div>
<div class="n" style="left:582.5px;width:120px;top:449px">0</div>
<div class="n" style="left:1030.5px;width:120px;top:449px">0</div>
<div class="n" style="left:1094.5px;width:120px;top:449px">0</div>
<div class="tn" style="left:90.5px;top:469px">15100</div>
<div class="t" style="left:199.5px;top:469px">Inventory - Raw Materials</div>
<div class="n" style="left:390.5px;width:120px;top:469px">198577.17</div>
<div class="n" style="left:454.5px;width:120px;top:469px">64695.49</div>
<div class="n" style="left:518.5px;width:120px;top:469px">67635.34</div>
<div class="n" style="left:582.5px;width:120px;top:469px">-5670211</div>
<div class="n" style="left:1030.5px;width:120px;top:469px">74814.8</div>
<div class="n" style="left:1094.5px;width:120px;top:469px">74814.8</div>
<div class="tn" style="left:90.5px;top:489px">15200</div>
<div class="t" style="left:199.5px;top:489px">Inventory - Work in Progress</div>
<div class="n" style="left:390.5px;width:120px;top:489px">-11263.94</div>
<div class="n" style="left:454.5px;width:120px;top:489px">-11263.9</div>
<div class="n" style="left:518.5px;width:120px;top:489px">-11263.9</div>
<div class="n" style="left:582.5px;width:120px;top:489px">1390234</div>
<div class="n" style="left:1030.5px;width:120px;top:489px">0</div>
<div class="n" style="left:1094.5px;width:120px;top:489px">528201.6</div>
<div class="tn" style="left:90.5px;top:509px">15300</div>
<div class="t" style="left:199.5px;top:509px">Inventory - Finished Goods</div>
<div class="n" style="left:390.5px;width:120px;top:509px">-196014.23</div>
<div class="n" style="left:454.5px;width:120px;top:509px">-242192</div>
<div class="n" style="left:518.5px;width:120px;top:509px">4901720</div>
<div class="n" style="left:582.5px;width:120px;top:509px">-268103</div>
<div class="n" style="left:1030.5px;width:120px;top:509px">-15742.7</div>
<div class="n" style="left:1094.5px;width:120px;top:509px">-15177.1</div>
<div class="tn" style="left:90.5px;top:529px">15400</div>
<div class="t" style="left:199.5px;top:529px">Inventory - In Transit</div>
<div class="n" style="left:390.5px;width:120px;top:529px">539.12</div>
<div class="n" style="left:454.5px;width:120px;top:529px">0</div>
<div class="n" style="left:518.5px;width:120px;top:529px">151100</div>
<div class="n" style="left:582.5px;width:120px;top:529px">0</div>
<div class="n" style="left:1030.5px;width:120px;top:529px">0</div>
<div class="n" style="left:1094.5px;width:120px;top:529px">-269.56</div>
<div class="tn" style="left:90.5px;top:549px">17000</div>
<div class="t" style="left:199.5px;top:549px">FA - Construction in Progress</div>
<div class="n" style="left:390.5px;width:120px;top:549px">75000</div>
<div class="n" style="left:454.5px;width:120px;top:549px">75000</div>
<div class="n" style="left:518.5px;width:120px;top:549px">75000</div>
<div class="n" style="left:582.5px;width:120px;top:549px">0</div>
<div class="n" style="left:1030.5px;width:120px;top:549px">0</div>
<div class="n" style="left:1094.5px;width:120px;top:549px">0</div>
<div class="tn" style="left:90.5px;top:569px">20100</div>
<div class="t" style="left:199.5px;top:569px">Accounts Payable</div>
<div class="n" style="left:390.5px;width:120px;top:569px">-1814753.56</div>
<div class="n" style="left:454.5px;width:120px;top:569px">-1732789</div>
<div class="n" style="left:518.5px;width:120px;top:569px">-4054380</div>
<div class="n" style="left:582.5px;width:120px;top:569px">-1762345</div>
<div class="n" style="left:1030.5px;width:120px;top:569px">3244432</div>
<div class="n" style="left:1094.5px;width:120px;top:569px">3306696</div>
<div class="tn" style="left:90.5px;top:589px">20200</div>
<div class="t" style="left:199.5px;top:589px">Received Not Invoiced Clearing</div>
<div class="n" style="left:390.5px;width:120px;top:589px">-133390</div>
<div class="n" style="left:454.5px;width:120px;top:589px">-133390</div>
<div class="n" style="left:518.5px;width:120px;top:589px">2205610</div>
<div class="n" style="left:582.5px;width:120px;top:589px">-133390</div>
<div class="n" style="left:1030.5px;width:120px;top:589px">-133390</div>
<div class="n" style="left:1094.5px;width:120px;top:589px">-133390</div>
<div class="tn" style="left:90.5px;top:609px">20250</div>
<div class="t" style="left:199.5px;top:609px">Accrued additional/landed cost</div>
<div class="n" style="left:390.5px;width:120px;top:609px">0</div>
<div class="n" style="left:454.5px;width:120px;top:609px">0</div>
<div class="n" style="left:518.5px;width:120px;top:609px">0</div>
<div class="n" style="left:582.5px;width:120px;top:609px">0</div>
<div class="n" style="left:1030.5px;width:120px;top:609px">0</div>
<div class="n" style="left:1094.5px;width:120px;top:609px">0</div>
<div class="tn" style="left:90.5px;top:629px">20650</div>
<div class="t" style="left:199.5px;top:629px">Inter-Company Due tp</div>
<div class="n" style="left:390.5px;width:120px;top:629px">0</div>
<div class="n" style="left:454.5px;width:120px;top:629px">0</div>
<div class="n" style="left:518.5px;width:120px;top:629px">0</div>
<div class="n" style="left:582.5px;width:120px;top:629px">0</div>
<div class="n" style="left:1030.5px;width:120px;top:629px">0</div>
<div class="n" style="left:1094.5px;width:120px;top:629px">0</div>
<div class="tn" style="left:90.5px;top:649px">20650</div>
<div class="t" style="left:199.5px;top:649px">Inter-Company Due To</div>
<div class="n" style="left:390.5px;width:120px;top:649px">0</div>
<div class="n" style="left:454.5px;width:120px;top:649px">0</div>
<div class="n" style="left:518.5px;width:120px;top:649px">0</div>
<div class="n" style="left:582.5px;width:120px;top:649px">0</div>
<div class="n" style="left:1030.5px;width:120px;top:649px">0</div>
<div class="n" style="left:1094.5px;width:120px;top:649px">0</div>
<div class="tn" style="left:90.5px;top:669px">22100</div>
<div class="t" style="left:199.5px;top:669px">Inter-Site Clearing</div>
<div class="n" style="left:390.5px;width:120px;top:669px">0</div>
<div class="n" style="left:454.5px;width:120px;top:669px">0</div>
<div class="n" style="left:518.5px;width:120px;top:669px">0</div>
<div class="n" style="left:582.5px;width:120px;top:669px">0</div>
<div class="n" style="left:1030.5px;width:120px;top:669px">0</div>
<div class="n" style="left:1094.5px;width:120px;top:669px">0</div>
<div class="tn" style="left:90.5px;top:689px">24100</div>
<div class="t" style="left:199.5px;top:689px">Accrued Salaries</div>
<div class="n" style="left:390.5px;width:120px;top:689px">-118500</div>
<div class="n" style="left:454.5px;width:120px;top:689px">0</div>
<div class="n" style="left:518.5px;width:120px;top:689px">0</div>
<div class="n" style="left:582.5px;width:120px;top:689px">0</div>
<div class="n" style="left:1030.5px;width:120px;top:689px">0</div>
<div class="n" style="left:1094.5px;width:120px;top:689px">0</div>
<div class="tn" style="left:90.5px;top:709px">25100</div>
<div class="t" style="left:199.5px;top:709px">Sales Tax Payable</div>
<div class="n" style="left:390.5px;width:120px;top:709px">118290</div>
<div class="n" style="left:454.5px;width:120px;top:709px">0</div>
<div class="n" style="left:518.5px;width:120px;top:709px">0</div>
<div class="n" style="left:582.5px;width:120px;top:709px">0</div>
<div class="n" style="left:1030.5px;width:120px;top:709px">140</div>
<div class="n" style="left:1094.5px;width:120px;top:709px">-7</div>
<div class="tn" style="left:90.5px;top:729px">41100</div>
<div class="t" style="left:199.5px;top:729px">Sales Revenue</div>
<div class="n" style="left:390.5px;width:120px;top:729px">-3688686.38</div>
<div class="n" style="left:454.5px;width:120px;top:729px">-4214207</div>
<div class="n" style="left:518.5px;width:120px;top:729px">-4444508</div>
<div class="n" style="left:582.5px;width:120px;top:729px">-4701031</div>
<div class="n" style="left:646.5px;width:120px;top:729px">-4216323</div>
<div class="n" style="left:710.5px;width:120px;top:729px">-3921450</div>
<div class="n" style="left:774.5px;width:120px;top:729px">-4155717</div>
<div class="n" style="left:838.5px;width:120px;top:729px">-2384042</div>
<div class="n" style="left:902.5px;width:120px;top:729px">-5403297</div>
<div class="n" style="left:966.5px;width:120px;top:729px">-3823948</div>
<div class="n" style="left:1030.5px;width:120px;top:729px">-3875794</div>
<div class="n" style="left:1094.5px;width:120px;top:729px">-4653093</div>
<div class="tn" style="left:90.5px;top:749px">41900</div>
<div class="t" style="left:199.5px;top:749px">Sales Revenue - Clearing</div>
<div class="n" style="left:390.5px;width:120px;top:749px">-0.02</div>
<div class="n" style="left:454.5px;width:120px;top:749px">298315</div>
<div class="n" style="left:518.5px;width:120px;top:749px">334155</div>
<div class="n" style="left:582.5px;width:120px;top:749px">286719.8</div>
<div class="n" style="left:646.5px;width:120px;top:749px">302191.5</div>
<div class="n" style="left:710.5px;width:120px;top:749px">300493.5</div>
<div class="n" style="left:774.5px;width:120px;top:749px">313353.7</div>
<div class="n" style="left:838.5px;width:120px;top:749px">297612.1</div>
<div class="n" style="left:902.5px;width:120px;top:749px">281278.8</div>
<div class="n" style="left:966.5px;width:120px;top:749px">2106149</div>
<div class="n" style="left:1030.5px;width:120px;top:749px">2061013</div>
<div class="n" style="left:1094.5px;width:120px;top:749px">2027100</div>
<div class="tn" style="left:90.5px;top:769px">44100</div>
<div class="t" style="left:199.5px;top:769px">Finance Charge Income</div>
<div class="n" style="left:390.5px;width:120px;top:769px">0</div>
<div class="n" style="left:454.5px;width:120px;top:769px">0</div>
<div class="n" style="left:518.5px;width:120px;top:769px">0</div>
<div class="n" style="left:582.5px;width:120px;top:769px">0</div>
<div class="n" style="left:646.5px;width:120px;top:769px">0</div>
<div class="n" style="left:710.5px;width:120px;top:769px">0</div>
<div class="n" style="left:774.5px;width:120px;top:769px">0</div>
<div class="n" style="left:838.5px;width:120px;top:769px">0</div>
<div class="n" style="left:902.5px;width:120px;top:769px">0</div>
<div class="n" style="left:966.5px;width:120px;top:769px">0</div>
<div class="n" style="left:1030.5px;width:120px;top:769px">0</div>
<div class="n" style="left:1094.5px;width:120px;top:769px">-50</div>
<div class="tn" style="left:90.5px;top:789px">49100</div>
<div class="t" style="left:199.5px;top:789px">Sales Discounts</div>
<div class="n" style="left:390.5px;width:120px;top:789px">-45</div>
<div class="n" style="left:454.5px;width:120px;top:789px">0</div>
<div class="n" style="left:518.5px;width:120px;top:789px">0</div>
<div class="n" style="left:582.5px;width:120px;top:789px">0</div>
<div class="n" style="left:646.5px;width:120px;top:789px">0</div>
<div class="n" style="left:710.5px;width:120px;top:789px">0</div>
<div class="n" style="left:774.5px;width:120px;top:789px">0</div>
<div class="n" style="left:838.5px;width:120px;top:789px">0</div>
<div class="n" style="left:902.5px;width:120px;top:789px">0</div>
<div class="n" style="left:966.5px;width:120px;top:789px">0</div>
<div class="n" style="left:1030.5px;width:120px;top:789px">0</div>
<div class="n" style="left:1094.5px;width:120px;top:789px">0</div>
<div class="tn" style="left:90.5px;top:809px">51100</div>
<div class="t" style="left:199.5px;top:809px">Cost of Sales</div>
<div class="n" style="left:390.5px;width:120px;top:809px">2071177.46</div>
<div class="n" style="left:454.5px;width:120px;top:809px">2068259</div>
<div class="n" style="left:518.5px;width:120px;top:809px">2017483</div>
<div class="n" style="left:582.5px;width:120px;top:809px">2239782</div>
<div class="n" style="left:646.5px;width:120px;top:809px">2027590</div>
<div class="n" style="left:710.5px;width:120px;top:809px">1827500</div>
<div class="n" style="left:774.5px;width:120px;top:809px">1915424</div>
<div class="n" style="left:838.5px;width:120px;top:809px">869414.9</div>
<div class="n" style="left:902.5px;width:120px;top:809px">2969162</div>
<div class="n" style="left:966.5px;width:120px;top:809px">645094.1</div>
<div class="n" style="left:1030.5px;width:120px;top:809px">527601.3</div>
<div class="n" style="left:1094.5px;width:120px;top:809px">793790.7</div>
<svg class="ab" style="left:191px;top:368px" width="6" height="6"><path d="M0 0H6V6z" fill="#e00"/></svg>
<svg class="ab" style="left:398px;top:248px" width="6" height="6"><path d="M0 0H6V6z" fill="#e00"/></svg>
<div class="ab" style="left:197px;top:246px;width:209px;height:23px;border:2px solid #217346"></div>
<div class="ab" style="left:402px;top:265px;width:5px;height:5px;background:#217346;border:1px solid #fff"></div>
<div class="ab" style="left:672px;top:271px;width:448px;height:467px;background:#8dc6f8;border:1px solid #3a3a3a;border-top-color:#2a2a2a"></div>
<div class="ab" style="left:672px;top:271px;width:448px;height:30px;line-height:30px;text-align:center;font-size:15px;color:#000;white-space:nowrap;padding-top:1px">Reporting Tree Node Selector</div>
<div class="ab" style="left:1080px;top:271px;width:34px;height:22px;background:#c75050;border:1px solid #5a2f2f;border-top:none"></div>
<svg class="ab" style="left:1091px;top:277px" width="13" height="11"><path d="M2 1.5L10.5 9.5M10.5 1.5L2 9.5" stroke="#000" stroke-width="2.2"/></svg>
<div class="ab" style="left:680px;top:301px;width:432px;height:429px;background:#f0f0f0"></div>
<div class="ab" style="left:704px;top:318px;width:383px;height:359px;background:#fff;border-style:solid;border-width:2px 1px 1px 2px;border-color:#6a6a6a #e3e3e3 #e3e3e3 #6a6a6a"></div>
<div class="ab" style="left:721px;top:324px;width:9px;height:9px;border:1px solid #8a8a8a;background:#fff"></div><div class="ab" style="left:723px;top:328px;width:5px;height:1px;background:#000"></div>
<div class="ab" style="left:731px;top:328px;width:14px;height:1px;background-image:linear-gradient(90deg,#808080 50%,transparent 50%);background-size:2px 1px"></div>
<div class="ab" style="left:746px;top:320px;height:16px;line-height:16px;font-size:10.6px;color:#000;white-space:nowrap">Conso</div>
<div class="ab" style="left:763px;top:336px;width:1px;height:4px;background-image:linear-gradient(180deg,#808080 50%,transparent 50%);background-size:1px 2px"></div>
<div class="ab" style="left:759px;top:340px;width:9px;height:9px;border:1px solid #8a8a8a;background:#fff"></div><div class="ab" style="left:761px;top:344px;width:5px;height:1px;background:#000"></div>
<div class="ab" style="left:769px;top:344px;width:14px;height:1px;background-image:linear-gradient(90deg,#808080 50%,transparent 50%);background-size:2px 1px"></div>
<div class="ab" style="left:784px;top:336px;height:16px;line-height:16px;font-size:10.6px;color:#000;white-space:nowrap">North America</div>
<div class="ab" style="left:763px;top:350px;width:1px;height:38px;background-image:linear-gradient(180deg,#808080 50%,transparent 50%);background-size:1px 2px"></div>
<div class="ab" style="left:801px;top:352px;width:1px;height:25px;background-image:linear-gradient(180deg,#808080 50%,transparent 50%);background-size:1px 2px"></div>
<div class="ab" style="left:802px;top:360px;width:19px;height:1px;background-image:linear-gradient(90deg,#808080 50%,transparent 50%);background-size:2px 1px"></div>
<div class="ab" style="left:821px;top:352px;height:16px;line-height:16px;font-size:10.6px;color:#000;white-space:nowrap">NA10</div>
<div class="ab" style="left:802px;top:376px;width:19px;height:1px;background-image:linear-gradient(90deg,#808080 50%,transparent 50%);background-size:2px 1px"></div>
<div class="ab" style="left:821px;top:368px;height:16px;line-height:16px;font-size:10.6px;color:#000;white-space:nowrap">NA20</div>
<div class="ab" style="left:759px;top:388px;width:9px;height:9px;border:1px solid #8a8a8a;background:#fff"></div><div class="ab" style="left:761px;top:392px;width:5px;height:1px;background:#000"></div>
<div class="ab" style="left:769px;top:392px;width:14px;height:1px;background-image:linear-gradient(90deg,#808080 50%,transparent 50%);background-size:2px 1px"></div>
<div class="ab" style="left:784px;top:384px;height:16px;line-height:16px;font-size:10.6px;color:#000;white-space:nowrap">Europe</div>
<div class="ab" style="left:801px;top:400px;width:1px;height:8px;background-image:linear-gradient(180deg,#808080 50%,transparent 50%);background-size:1px 2px"></div>
<div class="ab" style="left:802px;top:408px;width:19px;height:1px;background-image:linear-gradient(90deg,#808080 50%,transparent 50%);background-size:2px 1px"></div>
<div class="ab" style="left:821px;top:400px;height:16px;line-height:16px;font-size:10.6px;color:#000;white-space:nowrap">France</div>
<div class="ab" style="left:936px;top:702px;width:80px;height:24px;background:#000"></div>
<div class="ab" style="left:937px;top:703px;width:78px;height:22px;background:linear-gradient(#f4f4f4,#e8e8e8);border-style:solid;border-width:1px 2px 2px 1px;border-color:#fff #777 #777 #fff"></div>
<div class="ab" style="left:940px;top:706px;width:72px;height:16px;border:1px dotted #000"></div>
<div class="ab" style="left:936px;top:702px;width:80px;height:24px;line-height:27px;text-align:center;font-size:10.4px;color:#000">Ok</div>
<div class="ab" style="left:1024px;top:702px;width:80px;height:24px;background:linear-gradient(#f4f4f4,#e8e8e8);border-style:solid;border-width:1px;border-color:#fff #808080 #808080 #fff;box-shadow:1px 1px 0 #bdbdbd"></div>
<div class="ab" style="left:1024px;top:702px;width:80px;height:24px;line-height:27px;text-align:center;font-size:10.2px;color:#000">Cancel</div>
<svg class="ab" style="left:0;top:0" width="1462" height="828" viewBox="0 0 1462 828">
<rect x="195.5" y="243.5" width="212" height="28" fill="none" stroke="#ff0000" stroke-width="5"/>
<path d="M410 260 Q730 168.4 1094 46.6" stroke="#ff0000" stroke-width="3.4" fill="none"/>
<path d="M1108.3 41.8 L1079.3 40.1 L1093 46.9 L1084.9 60.9z" fill="#ff0000"/>
<ellipse cx="1210.5" cy="41" rx="106" ry="19" fill="none" stroke="#f8a100" stroke-width="3"/>
<path d="M1316.9 40.3 C1319.7 42.5 1328.2 49.3 1333.8 53.8 C1339.4 58.3 1345.1 62.6 1350.8 67.4 C1356.5 72.2 1362.6 77.5 1367.7 82.6 C1372.8 87.7 1377.8 92.2 1381.2 97.8 C1384.6 103.4 1387.0 111.1 1388.0 116.0 C1389.0 120.9 1387.8 123.3 1387.0 127.0 C1386.2 130.7 1385.2 134.6 1382.9 138.4 C1380.6 142.2 1379.0 144.7 1372.9 150.0 C1366.8 155.3 1355.9 164.3 1346.3 170.5 C1336.7 176.7 1327.5 180.9 1315.5 186.9 C1303.5 192.9 1290.8 199.2 1274.4 206.4 C1258.0 213.6 1235.8 221.9 1217.0 230.0 C1198.2 238.1 1177.7 247.7 1161.6 254.7 C1145.5 261.7 1133.2 266.6 1120.5 272.1 C1107.8 277.7 1098.9 282.3 1085.6 288.0 C1072.3 293.7 1055.5 300.1 1040.5 306.1 C1025.5 312.1 1010.3 318.4 995.3 324.2 C980.2 330.0 962.7 336.2 950.2 340.7 C937.7 345.2 926.5 348.9 920.1 351.3 C913.7 353.7 913.4 354.4 912.0 355.0" fill="none" stroke="#f8a100" stroke-width="3"/>
<path d="M904.3 358.8 L924.6 338.5 L914 354.3 L932.9 358z" fill="#f8a100"/>
<ellipse cx="799" cy="363" rx="105.7" ry="63.5" fill="none" stroke="#f8a100" stroke-width="3"/>
</svg>
</body></html>
